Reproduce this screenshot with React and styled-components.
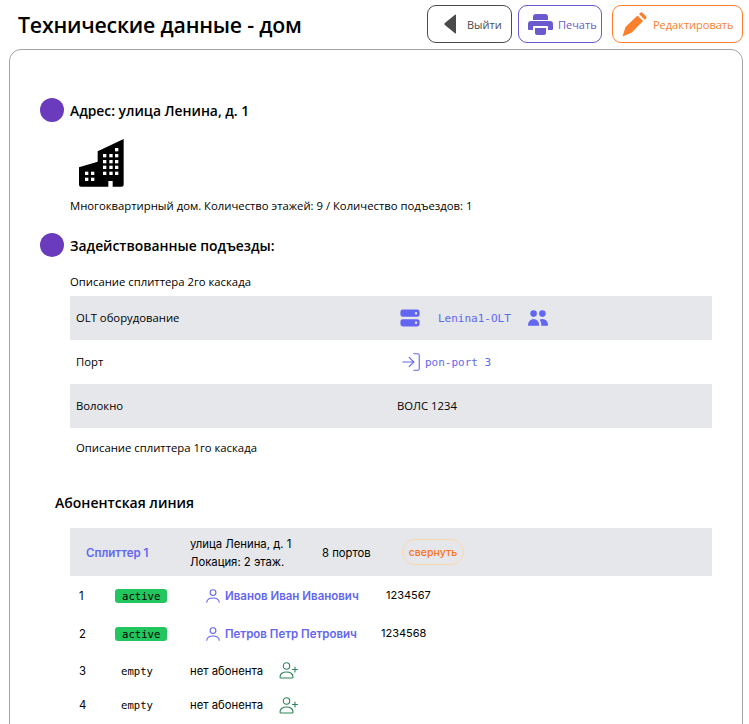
import React from "react";
import styled, { createGlobalStyle } from "styled-components";
import { HiServer, HiUsers } from "react-icons/hi";
import { LogIn } from "lucide-react";

const GlobalStyle = createGlobalStyle`
  html, body {
    margin: 0;
    height: 724px;
    overflow: hidden;
    background: #fff;
    font-family: "Open Sans", "Noto Sans", sans-serif;
    color: #000;
  }
`;

const Page = styled.div`
  padding: 5px 6px 0 9px;
`;

const Header = styled.header`
  display: flex;
  align-items: center;
  justify-content: space-between;
  height: 38px;
  margin-bottom: 6px;
`;

const Title = styled.h1`
  margin: 0 0 0 9px;
  font-size: 21.3px;
  font-weight: 600;
  letter-spacing: -0.2px;
`;

const Actions = styled.div`
  display: flex;
  gap: 6px;
`;

const ActionButton = styled.button`
  display: flex;
  align-items: center;
  gap: ${(p) => p.$gap || 6}px;
  box-sizing: border-box;
  height: 38px;
  width: ${(p) => p.$width}px;
  margin-left: ${(p) => p.$offset || 0}px;
  padding: 0 0 0 ${(p) => p.$pad || 9}px;
  border: 1px solid ${(p) => p.$color};
  border-radius: 9px;
  background: #fff;
  color: ${(p) => p.$color};
  font-family: inherit;
  font-size: 11px;
  white-space: nowrap;
  svg { flex: none; }
`;

const Card = styled.main`
  box-sizing: border-box;
  height: 700px;
  padding: 48px 30px 0 30px;
  border: 1px solid #a3a3a3;
  border-radius: 12px;
`;

const SectionHead = styled.div`
  display: flex;
  align-items: center;
  gap: 6px;
  height: 24px;
  font-size: 13.85px;
  font-weight: 600;
`;

const Dot = styled.span`
  width: 24px;
  height: 24px;
  border-radius: 50%;
  background: #6a3cbd;
`;

const Indent = styled.div`
  margin-left: 30px;
`;

const BuildingBox = styled.div`
  height: 48px;
  margin: 17px 0 0 9px;
  svg { display: block; }
`;

const Note = styled.p`
  margin: ${(p) => p.$top || 0}px 0 ${(p) => p.$bottom || 0}px ${(p) => p.$left || 0}px;
  font-size: 11.3px;
  line-height: 16px;
`;

const InfoRow = styled.div`
  display: flex;
  align-items: center;
  height: 44px;
  padding-left: 6px;
  font-size: 11.3px;
  background: ${(p) => (p.$shaded ? "#e5e7eb" : "transparent")};
`;

const InfoLabel = styled.div`
  width: 321px;
  margin-top: -2px;
`;

const InfoValue = styled.div`
  margin-top: -2px;
`;

const Mono = styled.span`
  font-family: "DejaVu Sans Mono", monospace;
  font-size: 11px;
  color: ${(p) => p.$color || "#000"};
`;

const PortLink = styled.div`
  display: flex;
  align-items: center;
  color: #6366f1;
  margin-left: ${(p) => p.$left || 0}px;
  gap: ${(p) => p.$gap}px;
  svg { flex: none; }
`;

const LineTitle = styled.h2`
  margin: 37px 0 15px 15px;
  font-size: 14px;
  font-weight: 600;
  line-height: 20px;
`;

const SplitterBar = styled.div`
  display: flex;
  align-items: center;
  box-sizing: border-box;
  height: 48px;
  padding-top: 2px;
  margin-left: 30px;
  background: #e5e7eb;
  font-family: Inter, sans-serif;
  font-size: 11.3px;
`;

const SplitterName = styled.div`
  width: 104px;
  padding-left: 16px;
  color: #6366f1;
  font-size: 11.5px;
  font-weight: 600;
  box-sizing: border-box;
`;

const SplitterPlace = styled.div`
  width: 132px;
  padding-left: 16px;
  line-height: 18px;
`;

const SplitterPorts = styled.div`
  width: 80px;
`;

const CollapsePill = styled.button`
  height: 26px;
  width: 62px;
  margin-top: -2px;
  padding: 0;
  border: 1px solid #fed7aa;
  border-radius: 13px;
  background: transparent;
  color: #f97316;
  font-family: inherit;
  font-size: 10.5px;
  font-weight: 500;
`;

const PortRow = styled.div`
  display: flex;
  align-items: center;
  height: ${(p) => p.$height}px;
  margin-left: 30px;
  font-family: Inter, sans-serif;
  font-size: 11.3px;
`;

const PortNumber = styled.div`
  width: 45px;
  padding-left: 9px;
  box-sizing: border-box;
`;

const StatusCell = styled.div`
  width: 75px;
  display: flex;
`;

const StatusBadge = styled.span`
  box-sizing: border-box;
  width: 52px;
  height: 14px;
  line-height: 14px;
  padding-left: ${(p) => (p.$active ? 7 : 6)}px;
  border-radius: 3px;
  font-family: "DejaVu Sans Mono", monospace;
  font-size: 10.6px;
  background: ${(p) => (p.$active ? "#22c55e" : "transparent")};
`;

const Subscriber = styled.div`
  display: flex;
  align-items: center;
  gap: 5px;
  width: ${(p) => p.$width}px;
  padding-left: 16px;
  box-sizing: border-box;
  color: #6366f1;
  font-size: 11.5px;
  font-weight: 600;
  svg { flex: none; }
`;

const AccountNo = styled.span`
  margin-top: -2px;
  font-size: 11px;
`;

const NoSubscriber = styled.div`
  display: flex;
  align-items: center;
  gap: 16px;
`;

const Building = () => (
  <svg width="45" height="48" viewBox="147 45 135 144">
    <path
      d="M147 130 L203 113 V82 L281 45 V182 Q281 188 275 188 H248 V171 H235 V188 H153 Q147 188 147 182 Z"
      fill="#000"
    />
    <g fill="#fff">
      {[90, 108, 125, 143].map((y) =>
        [219, 238, 255].map((x) => <rect key={`${x}-${y}`} x={x} y={y} width="10" height="10" />)
      )}
      <rect x="255" y="72" width="10" height="10" />
      {[143, 161].map((y) =>
        [165, 183].map((x) => <rect key={`${x}-${y}`} x={x} y={y} width="10" height="10" />)
      )}
    </g>
  </svg>
);

const BackArrow = () => (
  <svg width="12" height="20" viewBox="0 0 12 20">
    <path d="M12 1 V19 Q12 20 11 19.2 L0.8 11 Q0 10 0.8 9 L11 0.8 Q12 0 12 1 Z" fill="#4b4b4b" />
  </svg>
);

const PrinterIcon = () => (
  <svg width="25" height="21" viewBox="0 0 25 21" fill="#6a5acd">
    <path d="M5 6 V3 Q5 0 8 0 H17 Q20 0 20 3 V6 Z" />
    <path d="M3 7 H22 Q25 7 25 10 V15 Q25 16 24 16 H20 V13 Q20 12 19 12 H6 Q5 12 5 13 V16 H1 Q0 16 0 15 V10 Q0 7 3 7 Z" />
    <path d="M7 14 H18 V19 Q18 21 16 21 H9 Q7 21 7 19 Z" />
  </svg>
);

const PencilIcon = () => (
  <svg width="25" height="25" viewBox="0 0 25 25" fill="#fb7f2d">
    <path d="M0.5 24.5 L3.5 15 L15.5 3.5 L21 9 L9.5 20.8 Z" />
    <path d="M17 2 L18.6 0.6 Q19.4 0 20.2 0.6 L24.2 4.6 Q24.8 5.4 24.2 6.2 L22.7 7.8 Z" />
  </svg>
);

const PersonIcon = () => (
  <svg width="14" height="14" viewBox="0 0 14 14" fill="none" stroke="#6366f1" strokeWidth="1.1">
    <circle cx="7" cy="3.6" r="2.9" />
    <path d="M0.8 13.2 C1 10.4 3.6 9 7 9 C10.4 9 13 10.4 13.2 13.2" strokeLinecap="round" />
  </svg>
);

const AddPersonIcon = () => (
  <svg width="19" height="17" viewBox="0 0 19 17" fill="none" stroke="#2f855a" strokeWidth="1.1">
    <circle cx="7.5" cy="4" r="3.2" />
    <path d="M1 15 C1 11.8 3.8 10 7.5 10 C11.2 10 14 11.8 14 15 Q14 16 13 16 H2 Q1 16 1 15 Z" />
    <path d="M13.5 7.5 H18.5 M16 5 V10" strokeLinecap="round" />
  </svg>
);

const ports = [
  { n: 1, active: true, name: "Иванов Иван Иванович", account: "1234567", width: 196, height: 40 },
  { n: 2, active: true, name: "Петров Петр Петрович", account: "1234568", width: 191, height: 36 },
  { n: 3, height: 37 },
  { n: 4, height: 32 },
];

export default function App() {
  return (
    <Page>
      <GlobalStyle />
      <Header>
        <Title>Технические данные - дом</Title>
        <Actions>
          <ActionButton $color="#4b4b4b" $width={85} $pad={16} $gap={11}>
            <BackArrow />
            Выйти
          </ActionButton>
          <ActionButton $color="#6a5acd" $width={84} $pad={9} $gap={5}>
            <PrinterIcon />
            Печать
          </ActionButton>
          <ActionButton $color="#fb7f2d" $width={131} $offset={4} $pad={9} $gap={6}>
            <PencilIcon />
            Редактировать
          </ActionButton>
        </Actions>
      </Header>
      <Card>
        <SectionHead>
          <Dot />
          Адрес: улица Ленина, д. 1
        </SectionHead>
        <Indent>
          <BuildingBox>
            <Building />
          </BuildingBox>
          <Note $top={11} $bottom={19}>
            Многоквартирный дом. Количество этажей: 9 / Количество подъездов: 1
          </Note>
        </Indent>
        <SectionHead>
          <Dot />
          Задействованные подъезды:
        </SectionHead>
        <Indent>
          <Note $top={17} $bottom={6}>Описание сплиттера 2го каскада</Note>
          <InfoRow $shaded>
            <InfoLabel>OLT оборудование</InfoLabel>
            <PortLink $left={1} $gap={16}>
              <HiServer size={24} />
              <Mono $color="#6366f1">Lenina1-OLT</Mono>
              <HiUsers size={22} />
            </PortLink>
          </InfoRow>
          <InfoRow>
            <InfoLabel>Порт</InfoLabel>
            <PortLink $left={3} $gap={3}>
              <LogIn size={22} strokeWidth={1.2} />
              <Mono $color="#6366f1">pon-port 3</Mono>
            </PortLink>
          </InfoRow>
          <InfoRow $shaded>
            <InfoLabel>Волокно</InfoLabel>
            <InfoValue>ВОЛС 1234</InfoValue>
          </InfoRow>
          <Note $top={12} $left={6}>Описание сплиттера 1го каскада</Note>
        </Indent>
        <LineTitle>Абонентская линия</LineTitle>
        <SplitterBar>
          <SplitterName>Сплиттер 1</SplitterName>
          <SplitterPlace>
            улица Ленина, д. 1
            <br />
            Локация: 2 этаж.
          </SplitterPlace>
          <SplitterPorts>8 портов</SplitterPorts>
          <CollapsePill>свернуть</CollapsePill>
        </SplitterBar>
        {ports.map((port) => (
          <PortRow key={port.n} $height={port.height}>
            <PortNumber>{port.n}</PortNumber>
            <StatusCell>
              <StatusBadge $active={port.active}>{port.active ? "active" : "empty"}</StatusBadge>
            </StatusCell>
            {port.active ? (
              <>
                <Subscriber $width={port.width}>
                  <PersonIcon />
                  {port.name}
                </Subscriber>
                <AccountNo>{port.account}</AccountNo>
              </>
            ) : (
              <NoSubscriber>
                нет абонента
                <AddPersonIcon />
              </NoSubscriber>
            )}
          </PortRow>
        ))}
      </Card>
    </Page>
  );
}
